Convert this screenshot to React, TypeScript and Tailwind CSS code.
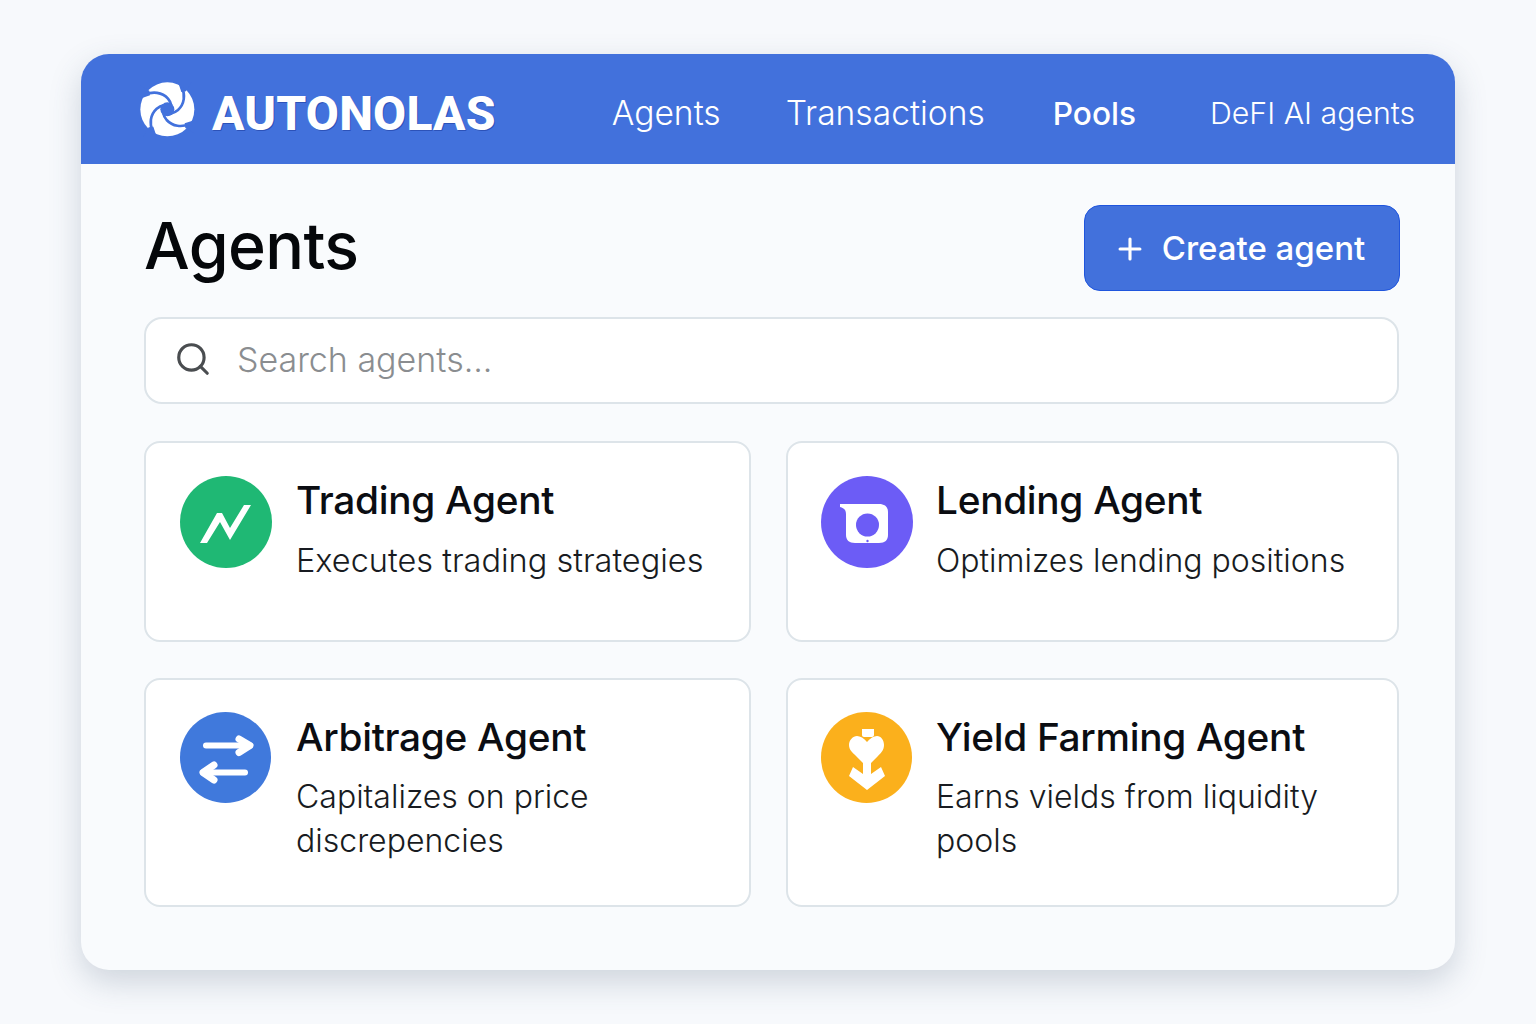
import { Plus, Search } from "lucide-react";
import type { ReactNode } from "react";

const Swirl = () => (
  <svg viewBox="14 14 165 165" className="h-[55px] w-[55px] shrink-0">
    <circle cx="96" cy="96" r="81" fill="#fff" />
    {[0, 90, 180, 270].map((deg) => (
      <g key={deg} transform={`rotate(${deg} 96 96)`}>
        <path d="M126 8h46l-20 34-14 2z" fill="#4271dc" />
        <path d="M140 30C150 52 148 80 128 98c-6 5-13 9-20 10" fill="none" stroke="#4271dc" strokeWidth="8" />
      </g>
    ))}
    <circle cx="96" cy="96" r="21" fill="#4271dc" />
  </svg>
);

const TradingIcon = () => (
  <svg viewBox="0 0 92 92" className="h-[92px] w-[92px]">
    <circle cx="46" cy="46" r="46" fill="#1fb874" />
    <path d="M20 67 37 37h5l8 15 14-23h7L50 64 40 46 27 67z" fill="#fff" />
  </svg>
);

const LendingIcon = () => (
  <svg viewBox="0 0 92 92" className="h-[92px] w-[92px]">
    <circle cx="46" cy="46" r="46" fill="#6c5cf6" />
    <path d="M19 28h39c6 0 9 3 9 8v23c0 5-3 8-9 8H34c-6 0-9-3-9-8V38c0-4-2-6-6-7z" fill="#fff" />
    <circle cx="46.500" cy="49" r="11.500" fill="#6c5cf6" />
    <circle cx="46.500" cy="65" r="1.200" fill="#6c5cf6" />
  </svg>
);

const ArbitrageIcon = () => (
  <svg viewBox="0 0 92 92" className="h-[92px] w-[92px]" fill="none" stroke="#fff" strokeLinecap="round" strokeLinejoin="round">
    <circle cx="45.500" cy="45.500" r="45.500" fill="#4079dc" stroke="none" />
    <path d="M26 33.500h44" strokeWidth="6" />
    <path d="M59 27l11 6.500-11 7" strokeWidth="7" />
    <path d="M65 60.500H23" strokeWidth="6" />
    <path d="M34 53l-11 7.500L34 68" strokeWidth="7" />
  </svg>
);

const YieldIcon = () => (
  <svg viewBox="0 0 92 92" className="h-[92px] w-[92px]">
    <circle cx="45.500" cy="45.500" r="45.500" fill="#fbb01c" />
    <path d="M41 17h12v6c0 1-1 2-2 2h-8c-1 0-2-1-2-2z" fill="#fff" />
    <path d="M46 30c3-4 7-6 10-6 4 0 7 4 7 9 0 5-3 8-6 11l-7 7v11l10-7 4 9-18 14-18-14 4-9 10 7V51l-7-7c-3-3-7-6-7-11 0-5 4-9 8-9 3 0 7 2 10 6z" fill="#fff" />
  </svg>
);

const Card = ({ icon, title, text, className, textClass }: { icon: ReactNode; title: string; text: ReactNode; className: string; textClass: string }) => (
  <div className={`flex rounded-[16px] border-2 border-[#dde4e9] bg-white pr-[20px] pt-[33px] ${className}`}>
    <div className="shrink-0">{icon}</div>
    <div className="min-w-0">
      <h3 className="mt-[1px] text-[38.800px] font-medium leading-[46px] tracking-[-0.3px] text-[#0b0d12]">{title}</h3>
      <p className={`font-light leading-[44px] text-[#181b21] ${textClass}`}>{text}</p>
    </div>
  </div>
);

export default function App() {
  return (
    <div className="min-h-[1024px] bg-[#f7f9fc] px-[81px] pt-[54px] font-['Inter',sans-serif]">
      <div className="h-[916px] w-[1374px] overflow-hidden rounded-[28px] bg-[#f9fbfd] shadow-[0_12px_32px_rgba(60,80,110,0.22)]">
        <header className="flex h-[110px] items-center bg-[#4271dc] pl-[59px] text-white">
          <Swirl />
          <span className="ml-[17px] mt-[9px] font-['Roboto',sans-serif] text-[48px] font-extrabold tracking-[0.2px] [text-shadow:1px_1px_0_#2c52b8]">AUTONOLAS</span>
          <nav className="ml-[116px] mt-[9px] flex items-center text-[33.600px] font-light">
            <a>Agents</a>
            <a className="ml-[65px]">Transactions</a>
            <a className="ml-[68px] text-[31.600px] font-medium">Pools</a>
            <a className="ml-[74px] text-[30.300px]">DeFI AI agents</a>
          </nav>
        </header>

        <main className="pl-[63px] pr-[56px] pt-[41px]">
          <div className="flex items-center justify-between">
            <h1 className="-mt-[5px] text-[64.500px] font-medium leading-[80px] tracking-[-0.6px] text-[#05070a]">Agents</h1>
            <button className="-mr-px flex h-[86px] w-[316px] items-center justify-center gap-[15px] rounded-[16px] border border-[#1f55dd] bg-[#4271dc] pr-[6px] pt-[2px] text-[33px] font-medium text-white">
              <Plus size={34} strokeWidth={2.2} />
              Create agent
            </button>
          </div>

          <div className="mt-[26px] flex h-[87px] items-center rounded-[18px] border-2 border-[#dde4e9] bg-white pb-[3px] pl-[28px]">
            <Search size={38} strokeWidth={2} className="text-[#4a4d50]" />
            <span className="ml-[25px] text-[34px] font-light text-[#8a8d90]">Search agents...</span>
          </div>

          <div className="mt-[37px] grid grid-cols-[607px_613px] grid-rows-[201px_229px] gap-x-[35px] gap-y-[36px]">
            <Card className="gap-[24px] pl-[34px]" textClass="mt-[16px] text-[32.500px]" icon={<TradingIcon />} title="Trading Agent" text="Executes trading strategies" />
            <Card className="gap-[23px] pl-[33px]" textClass="mt-[16px] text-[32px]" icon={<LendingIcon />} title="Lending Agent" text="Optimizes lending positions" />
            <Card className="gap-[24px] pl-[34px]" textClass="mt-[15px] text-[32px]" icon={<div className="-mt-[1px]"><ArbitrageIcon /></div>} title="Arbitrage Agent" text="Capitalizes on price discrepencies" />
            <Card className="gap-[23px] pl-[33px]" textClass="mt-[15px] text-[32px]" icon={<div className="-mt-[1px]"><YieldIcon /></div>} title="Yield Farming Agent" text="Earns vields from liquidity pools" />
          </div>
        </main>
      </div>
    </div>
  );
}
